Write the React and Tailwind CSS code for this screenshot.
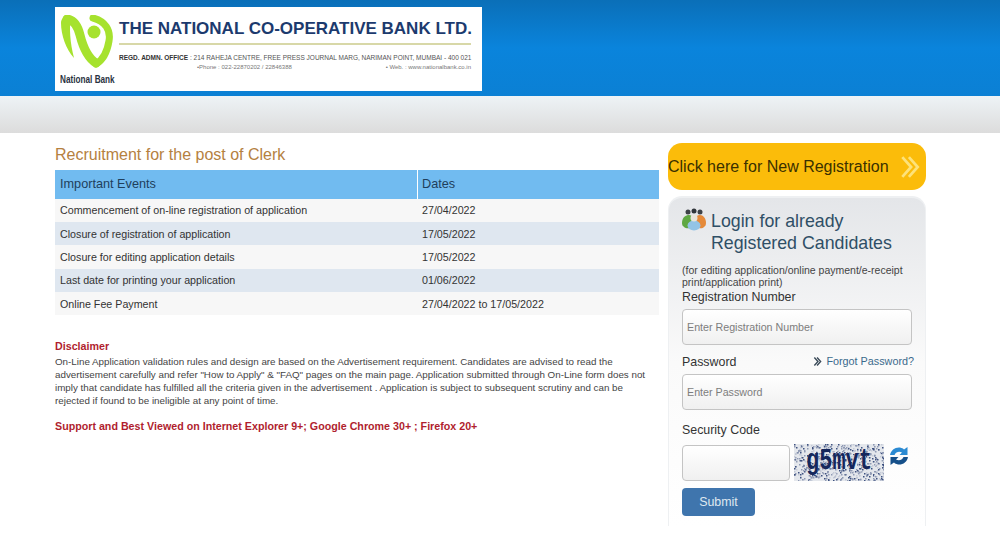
import React from 'react';

const events = [
  ['Commencement of on-line registration of application', '27/04/2022'],
  ['Closure of registration of application', '17/05/2022'],
  ['Closure for editing application details', '17/05/2022'],
  ['Last date for printing your application', '01/06/2022'],
  ['Online Fee Payment', '27/04/2022 to 17/05/2022'],
];

const LogoMark = () => (
  <svg width="54" height="54" viewBox="0 0 54 54" className="block">
    <path d="M1 8 C1 2 7 0 11 3 C9 12 10 28 14 43 C6 34 1 20 1 8 Z" fill="#a6e22e" />
    <path d="M7 4 C15 5 18 12 20 20 C23 32 28 43 36 48" fill="none" stroke="#a6e22e" strokeWidth="9" strokeLinecap="round" />
    <path d="M33 3 C45 6 51 15 49 26 C47 38 43 45 36 49" fill="none" stroke="#a6e22e" strokeWidth="7" strokeLinecap="round" />
    <circle cx="34" cy="17" r="6.500" fill="#a6e22e" />
  </svg>
);

const PeopleIcon = () => (
  <svg width="24" height="23" viewBox="0 0 24 23" className="shrink-0">
    <circle cx="6" cy="4" r="2.500" fill="#3d4248" />
    <circle cx="18" cy="4" r="2.500" fill="#3d4248" />
    <circle cx="12" cy="3" r="2.500" fill="#30353b" />
    <path d="M0 15 C0 9 4 7 7 7 C10 7 12 10 11 14 L8 20 C4 21 0 19 0 15 Z" fill="#5fa843" />
    <path d="M13 13 C13 9 15 7 18 7 C21 7 24 10 24 15 C24 19 20 21 17 20 Z" fill="#e58a3a" />
    <ellipse cx="12" cy="17.500" rx="6.500" ry="5" fill="#93c4e6" />
    <circle cx="12" cy="10" r="3.500" fill="#e9e4da" />
  </svg>
);

const Chevrons = ({ className, color, width = 2, size = 20 }) => (
  <svg width={size} height={size} viewBox="0 0 20 20" className={className} fill="none" stroke={color} strokeWidth={width}>
    <path d="M3 1 L11 10 L3 19" />
    <path d="M9 1 L17 10 L9 19" />
  </svg>
);

const RefreshIcon = () => (
  <svg width="20" height="20" viewBox="0 0 20 20" className="shrink-0">
    <path d="M1 9 C2 4 6 1 11 1.500 C13 2 14 2.500 15 3.500 L18.500 1 L18.500 9 L10.500 9 L13 6.500 C10.500 5 7 5.500 5.500 9 Z" fill="#2b8ad2" />
    <path d="M19 11 C18 16 14 19 9 18.500 C7 18 6 17.500 5 16.500 L1.500 19 L1.500 11 L9.500 11 L7 13.500 C9.500 15 13 14.500 14.500 11 Z" fill="#16508a" />
  </svg>
);

// pseudo random speckle behind the captcha word
const specks = Array.from({ length: 620 }, (_, i) => ({
  x: (i * 37 + (i * i) % 23) % 90,
  y: (i * 13 + (i * i * 7) % 29) % 37,
  c: i % 3 === 0 ? '#3f5280' : i % 3 === 1 ? '#8f9ab4' : '#c5cbd8',
}));

const Captcha = () => (
  <div className="relative w-[90px] h-[37px] bg-[#e4e7ec] overflow-hidden flex items-center justify-center">
    <svg width="90" height="37" className="absolute inset-0">
      {specks.map((s, i) => (
        <rect key={i} x={s.x} y={s.y} width="1.500" height="1.500" fill={s.c} />
      ))}
    </svg>
    <span className="relative -mt-[1px] font-['Liberation_Mono',monospace] font-bold text-[22px] leading-none text-[#15275c] scale-y-[1.3]">g5mvt</span>
  </div>
);

const Field = ({ placeholder, className = 'w-full' }) => (
  <div className={`${className} h-[36px] rounded-[4px] border border-[#c4c4c4] bg-gradient-to-b from-white to-[#f0f0f0] flex items-center px-[4px] text-[10.700px] text-[#7d7d7d]`}>
    {placeholder}
  </div>
);

export default function App() {
  return (
    <div className="w-[1000px] h-[556px] overflow-hidden bg-white font-['Liberation_Sans',Arial,sans-serif] text-[#333]">
      {/* Header */}
      <div className="h-[96px] pt-[7px] pl-[55px] bg-gradient-to-b from-[#0a6fb8] via-[#0a84dc] to-[#0b80d4]">
        <div className="w-[427px] h-[84px] bg-white flex pl-[5px] pt-[8px]">
          <div className="w-[59px] flex flex-col shrink-0">
            <LogoMark />
            <div className="font-bold text-[10px] leading-[12px] mt-[5px] text-[#2a3242] whitespace-nowrap scale-x-[0.82] origin-left">National Bank</div>
          </div>
          <div className="pt-[3px] w-[352px]">
            <div className="font-bold text-[17px] leading-[22px] text-[#1c3a6e] whitespace-nowrap">THE NATIONAL CO-OPERATIVE BANK LTD.</div>
            <div className="h-[2px] mt-[3px] bg-[#d8d8a8]" />
            <div className="mt-[8px] text-[6.500px] leading-[9px] text-[#555] whitespace-nowrap">
              <span className="font-bold text-[#333]">REGD. ADMN. OFFICE</span> : 214 RAHEJA CENTRE, FREE PRESS JOURNAL MARG, NARIMAN POINT, MUMBAI - 400 021
            </div>
            <div className="mt-[1px] flex text-[6px] leading-[8px] text-[#777]">
              <span className="ml-[78px]">•Phone : 022-22870202 / 22846388</span>
              <span className="ml-auto">• Web. : www.nationalbank.co.in</span>
            </div>
          </div>
        </div>
      </div>
      <div className="h-[37px] bg-gradient-to-b from-[#eef3f6] to-[#dcdcdc]" />

      {/* Main */}
      <div className="flex pl-[55px] pt-[11px]">
        <div className="w-[604px] shrink-0">
          <h1 className="text-[16px] leading-[22px] text-[#b5813f]">Recruitment for the post of Clerk</h1>
          <div className="mt-[4px]">
            <div className="flex h-[28.500px] items-center bg-[#71bbf0] text-[12.700px] text-[#1f3f5c]">
              <div className="w-[363px] pl-[5px] pt-[1px] border-r border-white h-full flex items-center">Important Events</div>
              <div className="pl-[4px] pt-[1px]">Dates</div>
            </div>
            {events.map(([name, date], i) => (
              <div key={name} className={`flex h-[23.400px] items-center text-[10.700px] text-[#333] ${i % 2 ? 'bg-[#dfe7f0]' : 'bg-[#f7f7f7]'}`}>
                <div className="w-[363px] pl-[5px]">{name}</div>
                <div className="pl-[4px]">{date}</div>
              </div>
            ))}
          </div>
          <div className="mt-[23.500px] text-[10.700px] leading-[14px] font-bold text-[#b01e2e]">Disclaimer</div>
          <p className="text-[9.800px] leading-[13px] text-[#444] mt-[2px] w-[596px]">
            On-Line Application validation rules and design are based on the Advertisement requirement. Candidates are advised to read the advertisement carefully and refer "How to Apply" &amp; "FAQ" pages on the main page. Application submitted through On-Line form does not imply that candidate has fulfilled all the criteria given in the advertisement . Application is subject to subsequent scrutiny and can be rejected if found to be ineligible at any point of time.
          </p>
          <div className="mt-[12px] text-[10.700px] leading-[14px] font-bold text-[#b01e2e]">Support and Best Viewed on Internet Explorer 9+; Google Chrome 30+ ; Firefox 20+</div>
        </div>

        {/* Right column */}
        <div className="w-[258px] ml-[9px] shrink-0 -mt-[1px]">
          <div className="h-[47px] rounded-[14px] bg-[#fbbc0a] flex items-center justify-between pr-[5px] pt-[1px] text-[16px] text-[#3a3000] whitespace-nowrap">
            <span>Click here for New Registration</span>
            <Chevrons color="#fde27a" width={2.500} size={22} />
          </div>
          <div className="mt-[6px] h-[330px] rounded-t-[14px] border-t-[2px] border-x border-[#eef0f2] bg-gradient-to-b from-[#e4e6e9] via-[#fafafa] to-white px-[13px] pt-[10px]">
            <div className="flex gap-[5px]">
              <PeopleIcon />
              <div className="text-[17.800px] leading-[22px] text-[#2f4f66] pt-[2px]">Login for already<br />Registered Candidates</div>
            </div>
            <div className="mt-[10px] text-[10.500px] leading-[12px] text-[#444]">(for editing application/online payment/e-receipt print/application print)</div>
            <div className="text-[12.400px] leading-[14px] text-[#333] mt-[2px]">Registration Number</div>
            <div className="mt-[5px]"><Field placeholder="Enter Registration Number" /></div>
            <div className="flex items-end justify-between mt-[9px] mb-[4px] -mr-[2px]">
              <span className="text-[12.400px] leading-[16px]">Password</span>
              <span className="flex items-center gap-[4px] text-[10.800px] leading-[14px] text-[#3b6a8c] pb-[2px]">
                <Chevrons color="#3a4a58" width={3} size={9} />
                Forgot Password?
              </span>
            </div>
            <Field placeholder="Enter Password" />
            <div className="text-[12.400px] leading-[16px] mt-[12px]">Security Code</div>
            <div className="flex items-center mt-[6px]">
              <Field placeholder="" className="w-[108px]" />
              <div className="ml-[4px]"><Captcha /></div>
              <div className="ml-[5px] -mt-[14px]"><RefreshIcon /></div>
            </div>
            <div className="mt-[7px] w-[73px] h-[28px] rounded-[4px] bg-[#3f75ad] text-[#dfe8f0] text-[12.400px] flex items-center justify-center">Submit</div>
          </div>
        </div>
      </div>
    </div>
  );
}
